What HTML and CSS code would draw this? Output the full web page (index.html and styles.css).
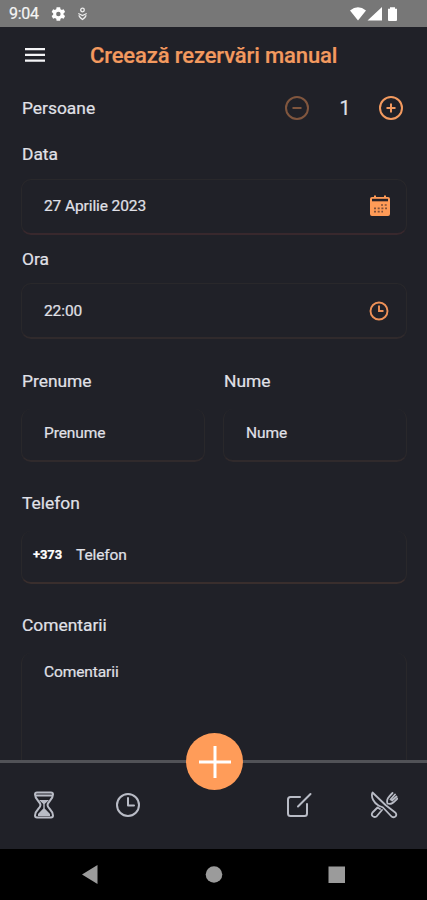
FILE: index.html
```html
<!DOCTYPE html>
<html lang="ro">

<head>
  <meta charset="UTF-8">
  <meta name="viewport" content="width=device-width, initial-scale=1.0">
  <link rel="stylesheet" href="styles.css">
  <title>Creează rezervări manual</title>
</head>

<body>
  <div class="status-bar">
    <span class="time">9:04</span>
    <svg class="gear" width="18" height="18" viewBox="0 0 24 24"><path fill="#fff" fill-rule="evenodd" d="M19.400 13a7.500 7.500 0 0 0 0-2l2.100-1.700-2-3.500-2.500 1a7.500 7.500 0 0 0-1.700-1L14.900 3h-4.800l-.4 2.800a7.500 7.500 0 0 0-1.700 1l-2.500-1-2 3.500L5.600 11a7.500 7.500 0 0 0 0 2l-2.100 1.700 2 3.500 2.500-1a7.500 7.500 0 0 0 1.700 1l.4 2.800h4.800l.4-2.800a7.500 7.500 0 0 0 1.700-1l2.500 1 2-3.500zM12.500 15a3 3 0 1 1 0-6 3 3 0 0 1 0 6z"/></svg>
    <svg class="debug" width="11" height="14" viewBox="0 0 11 14" fill="none" stroke="#eee" stroke-width="1.300"><circle cx="5.500" cy="3" r="1.800"/><path d="M1.300 6.500l4.200 2 4.200-2M2 8.300q0 1.700 3.500 4.200Q9 10 9 8.300"/></svg>
    <svg class="signals" width="50" height="16" viewBox="0 0 50 16" fill="#fff"><path d="M0 4.500Q8 -2 16 4.500L8 14.500zM17.500 14.500H32V1zM38 2.800h2V1.200h5v1.600h2V14q0 1-1 1h-7q-1 0-1-1z"/></svg>
  </div>

  <header class="header">
    <svg width="22" height="16" viewBox="0 0 22 16" stroke="#f4f4f6" stroke-width="2.300"><path d="M1 1.200h20M1 6.900h20M1 12.600h20"/></svg>
    <h1>Creează rezervări manual</h1>
  </header>

  <main class="form">
    <div class="persons">
      <span class="label">Persoane</span>
      <div class="counter">
        <svg class="minus" width="26" height="26" viewBox="0 0 26 26"><circle cx="13" cy="13" r="11"/><path d="M8.500 13h9"/></svg>
        <span class="count">1</span>
        <svg width="26" height="26" viewBox="0 0 26 26"><circle cx="13" cy="13" r="11"/><path d="M8.500 13h9M13 8.500v9"/></svg>
      </div>
    </div>

    <div class="label date-label">Data</div>
    <div class="field date">
      <span>27 Aprilie 2023</span>
      <svg width="20" height="22" viewBox="0 0 20 22"><path fill="#ff9b57" d="M2 2h2V.5h2V2h8V.5h2V2h2q2 0 2 2v15q0 2-2 2H2q-2 0-2-2V4q0-2 2-2z"/><path fill="#252127" d="M2 3.800h16v2.500H2z"/><path stroke="#80503a" stroke-width="1.700" stroke-dasharray="2 1.700" d="M11 10h6M4 13.300h13M4 16.600h9"/></svg>
    </div>

    <div class="label time-label">Ora</div>
    <div class="field hour">
      <span>22:00</span>
      <svg width="20" height="20" viewBox="0 0 20 20" fill="none" stroke="#ee9158" stroke-width="1.900"><circle cx="10" cy="10" r="8.500"/><path d="M10 4.500V10h4.500"/></svg>
    </div>

    <div class="names">
      <div>
        <div class="label">Prenume</div>
        <div class="field open">Prenume</div>
      </div>
      <div>
        <div class="label">Nume</div>
        <div class="field open">Nume</div>
      </div>
    </div>

    <div class="label phone-label">Telefon</div>
    <div class="field open phone"><span class="prefix">+373</span><span>Telefon</span></div>

    <div class="label comments-label">Comentarii</div>
    <div class="field open comments">Comentarii</div>
  </main>

  <nav class="tabs">
    <div class="tab">
      <svg class="hourglass" width="20" height="28" viewBox="0 0 20 28"><path d="M3 1.500h14q2 0 2 2c0 5.500-5.500 7-5.500 10.500s5.500 5 5.500 10.500q0 2-2 2H3q-2 0-2-2C1 19 6.500 17.500 6.500 14S1 9 1 3.500q0-2 2-2zM2 4.500h16"/><path class="sand" d="M5 9h10l-4.300 4v4.500l5.300 5.500v2H4v-2l5.300-5.500V13z"/></svg>
    </div>
    <div class="tab">
      <svg width="26" height="26" viewBox="0 0 26 26"><circle cx="13" cy="13" r="11"/><path d="M13 6v7.500h6"/></svg>
    </div>
    <div class="tab"></div>
    <div class="tab">
      <svg width="26" height="26" viewBox="0 0 26 26"><path d="M14 5H4.500Q2 5 2 7.500v14Q2 24 4.500 24h14q2.500 0 2.500-2.500V12M12 14.500L24.500 2"/></svg>
    </div>
    <div class="tab">
      <svg class="cutlery" width="28" height="28" viewBox="0 0 28 28"><path d="M2.500 1.500C.5 6 4 12 8.500 14.500c1.500 1 3 1 4.500 2l8.500 9c3.500 2 6-1 4-3.800L15.500 14zM10 18l-2.500-1.500-5 5c-2 3 1 5.500 4 4l5.500-6.500M17.500 12.500c-1.500-4 1-6.500 5-10.500M17.500 12.500c4 1.500 6.500-1.500 10-5M20.500 8.500l4.500-5M22 9.500l4.500-4"/></svg>
    </div>
    <button class="add"><svg width="34" height="34" viewBox="0 0 34 34"><path d="M1 17h32M17 1v32"/></svg></button>
  </nav>

  <div class="android-nav">
    <svg width="427" height="51" viewBox="0 0 427 51" fill="#9b9b9b"><path d="M82 25.500L97.500 16v19zM328.500 17.500h16.500v16.500h-16.500z"/><circle cx="214" cy="25.500" r="8.300"/></svg>
  </div>
</body>

</html>
```
FILE: styles.css
```css
* {
  box-sizing: border-box;
}

body {
  margin: 0;
  width: 427px;
  height: 900px;
  display: flex;
  flex-direction: column;
  overflow: hidden;
  background-color: #202128;
  color: #e0e1e8;
  font-family: Roboto, sans-serif;
  -webkit-text-stroke: 0.2px;
}

svg {
  display: block;
  flex-shrink: 0;
}

.status-bar {
  height: 27px;
  display: flex;
  align-items: center;
  padding: 0 27px 0 9px;
  background-color: #777;
}

.time {
  width: 40px;
  padding-top: 1px;
  font-size: 16px;
  letter-spacing: -0.3px;
  line-height: 20px;
  color: #f4f4f4;
}

.debug {
  margin-left: 10px;
}

.signals {
  margin-left: auto;
}

.header {
  height: 57px;
  display: flex;
  align-items: center;
  padding-left: 24px;
}

.header h1 {
  margin: 0 0 0 44px;
  font-size: 22px;
  font-weight: 500;
  letter-spacing: -0.12px;
  line-height: 26px;
  color: #f39a5f;
  white-space: nowrap;
}

.form {
  height: 676px;
  padding: 11px 20px 0 21px;
  overflow: hidden;
}

.label {
  padding: 1px 0 0 1px;
  font-size: 17.4px;
  line-height: 23px;
}

.persons {
  height: 26px;
  display: flex;
  align-items: center;
  justify-content: space-between;
}

.counter {
  display: flex;
  align-items: center;
  padding-right: 3px;
}

.counter svg {
  fill: none;
  stroke: #f39a5f;
  stroke-width: 2;
}

.counter .minus {
  stroke: #80563e;
}

.count {
  width: 68px;
  padding: 1px 0 0 2px;
  text-align: center;
  font-size: 19.5px;
}

.date-label {
  margin-top: 21px;
}

.field {
  height: 56px;
  display: flex;
  align-items: center;
  justify-content: space-between;
  padding: 0 17px 0 22px;
  border: 1px solid #29282b;
  border-bottom: 2px solid #302a2c;
  border-radius: 10px;
  font-size: 15.5px;
  letter-spacing: -0.1px;
  line-height: 20px;
}

.date {
  margin-top: 13px;
  padding-right: 16px;
  padding-bottom: 1px;
  border-bottom-color: #38282d;
}

.time-label {
  margin-top: 12px;
}

.hour {
  margin-top: 12px;
}

.names {
  display: grid;
  grid-template-columns: 184px 184px;
  gap: 18px;
  margin-top: 30px;
}

.open {
  height: 53px;
  margin-top: 16px;
  padding-bottom: 3px;
  border-top: none;
}

.phone-label,
.comments-label {
  margin-top: 29px;
}

.phone {
  justify-content: flex-start;
  padding-left: 11px;
  border-bottom-color: #392e2d;
}

.prefix {
  width: 43px;
  font-size: 13px;
  font-weight: 700;
  color: #fff;
}

.comments {
  height: 150px;
  align-items: flex-start;
  padding-top: 9px;
}

.tabs {
  position: relative;
  height: 89px;
  display: grid;
  grid-template-columns: repeat(5, 1fr);
  border-top: 3px solid #515257;
  background-color: #202128;
}

.tab {
  display: flex;
  align-items: center;
  justify-content: center;
  padding-bottom: 2px;
}

.tab svg {
  fill: none;
  stroke: #b9bcc6;
  stroke-width: 2;
  stroke-linecap: round;
  stroke-linejoin: round;
}

.tab .hourglass {
  margin-left: 2px;
}

.tab .sand {
  fill: #b9bcc6;
  stroke: none;
}

.tab .cutlery {
  stroke-width: 1.8;
}

/* sits across the top edge of the tab bar */
.add {
  position: absolute;
  top: -30px;
  left: 186px;
  width: 57px;
  height: 57px;
  display: flex;
  align-items: center;
  justify-content: center;
  padding: 0;
  border: none;
  border-radius: 50%;
  background-color: #ff9c59;
}

.add path {
  stroke: #fff;
  stroke-width: 3;
}

.android-nav {
  height: 51px;
  background-color: #000;
}
```
